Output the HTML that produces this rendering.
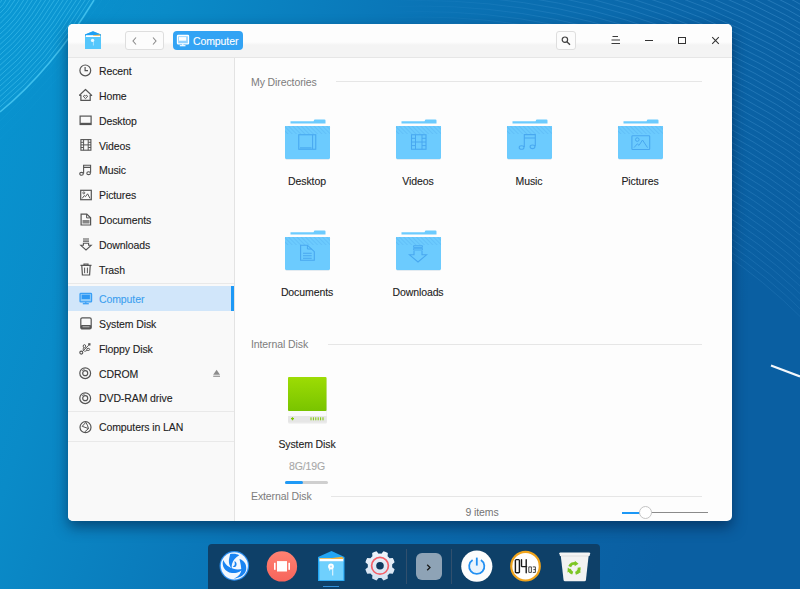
<!DOCTYPE html>
<html><head><meta charset="utf-8">
<style>
*{margin:0;padding:0;box-sizing:border-box}
html,body{width:800px;height:589px;overflow:hidden}
body{position:relative;font-family:"Liberation Sans",sans-serif;background:#0a74b6}
.a{position:absolute}
.t{position:absolute;font-size:10.5px;line-height:13px;white-space:nowrap;letter-spacing:-0.1px;color:#222;-webkit-text-stroke:0.1px currentColor}
.hdr{color:#7c7c7c;-webkit-text-stroke:0 !important}
.c{text-align:center;width:120px}
svg{position:absolute;overflow:visible}
</style></head><body>

<!-- background lines -->
<svg class="a" style="left:0;top:0" width="800" height="589" viewBox="0 0 800 589">
  <defs>
    <linearGradient id="bgg" x1="0" y1="0" x2="1" y2="0.25">
      <stop offset="0" stop-color="#0895d1"/>
      <stop offset="0.2" stop-color="#0a8bc8"/>
      <stop offset="0.5" stop-color="#0a74b6"/>
      <stop offset="0.8" stop-color="#0a66a9"/>
      <stop offset="1" stop-color="#0a5fa2"/>
    </linearGradient>
    <radialGradient id="gUR" cx="800" cy="0" r="420" gradientUnits="userSpaceOnUse"><stop offset="0" stop-color="#fff"/><stop offset="0.6" stop-color="#fff" stop-opacity=".6"/><stop offset="1" stop-color="#fff" stop-opacity="0"/></radialGradient><mask id="mUR"><rect width="800" height="589" fill="url(#gUR)"/></mask>
  </defs>
  <rect width="800" height="589" fill="url(#bgg)"/>
  <path d="M0 0 H96 Q53 70 0 112 Z" fill="#12a0dc" opacity=".3"/>
  <path d="M0 112.0 Q51.7 69.4 94.0 0" stroke="#52cdf5" stroke-width="1.5" fill="none" opacity="0.75"/>
  <path d="M0 106.8 Q49.3 66.2 89.6 0" stroke="#52cdf5" stroke-width="1.0" fill="none" opacity="0.45"/>
  <path d="M0 101.6 Q46.9 63.0 85.2 0" stroke="#52cdf5" stroke-width="1.0" fill="none" opacity="0.45"/>
  <path d="M0 96.4 Q44.4 59.8 80.8 0" stroke="#52cdf5" stroke-width="1.0" fill="none" opacity="0.45"/>
  <path d="M0 91.2 Q42.0 56.5 76.4 0" stroke="#52cdf5" stroke-width="1.0" fill="none" opacity="0.45"/>
  <path d="M0 86.0 Q39.6 53.3 72.0 0" stroke="#52cdf5" stroke-width="1.0" fill="none" opacity="0.45"/>
  <path d="M0 80.8 Q37.2 50.1 67.6 0" stroke="#52cdf5" stroke-width="1.0" fill="none" opacity="0.45"/>
  <path d="M0 75.6 Q34.8 46.9 63.2 0" stroke="#52cdf5" stroke-width="1.0" fill="none" opacity="0.45"/>
  <path d="M0 70.4 Q32.3 43.6 58.8 0" stroke="#52cdf5" stroke-width="1.0" fill="none" opacity="0.45"/>
  <path d="M0 65.2 Q29.9 40.4 54.4 0" stroke="#52cdf5" stroke-width="1.0" fill="none" opacity="0.45"/>
  <path d="M0 60.0 Q27.5 37.2 50.0 0" stroke="#52cdf5" stroke-width="1.0" fill="none" opacity="0.45"/>
  <path d="M0 54.8 Q25.1 34.0 45.6 0" stroke="#52cdf5" stroke-width="1.0" fill="none" opacity="0.45"/>
  <path d="M0 49.6 Q22.7 30.8 41.2 0" stroke="#52cdf5" stroke-width="1.0" fill="none" opacity="0.45"/>
  <path d="M0 44.4 Q20.2 27.5 36.8 0" stroke="#52cdf5" stroke-width="1.0" fill="none" opacity="0.45"/>
  <path d="M0 39.2 Q17.8 24.3 32.4 0" stroke="#52cdf5" stroke-width="1.0" fill="none" opacity="0.45"/>
  <path d="M0 34.0 Q15.4 21.1 28.0 0" stroke="#52cdf5" stroke-width="1.0" fill="none" opacity="0.45"/>
  <path d="M0 28.8 Q13.0 17.9 23.6 0" stroke="#52cdf5" stroke-width="1.0" fill="none" opacity="0.45"/>
  <path d="M0 23.6 Q10.6 14.6 19.2 0" stroke="#52cdf5" stroke-width="1.0" fill="none" opacity="0.45"/>
  <path d="M0 18.4 Q8.1 11.4 14.8 0" stroke="#52cdf5" stroke-width="1.0" fill="none" opacity="0.45"/>
  <path d="M0 13.2 Q5.7 8.2 10.4 0" stroke="#52cdf5" stroke-width="1.0" fill="none" opacity="0.45"/>
  <path d="M0 8.0 Q3.3 5.0 6.0 0" stroke="#52cdf5" stroke-width="1.0" fill="none" opacity="0.45"/>
  <path d="M0 2.8 Q0.9 1.7 1.6 0" stroke="#52cdf5" stroke-width="1.0" fill="none" opacity="0.45"/>
  <path d="M0 121.0 Q51.0 72.6 102.0 0" stroke="#3cbde8" stroke-width="0.7" fill="none" opacity="0.130"/>
  <path d="M0 130.0 Q55.0 78.0 110.0 0" stroke="#3cbde8" stroke-width="0.7" fill="none" opacity="0.100"/>
  <path d="M0 139.0 Q59.0 83.4 118.0 0" stroke="#3cbde8" stroke-width="0.7" fill="none" opacity="0.070"/>
  <path d="M0 148.0 Q63.0 88.8 126.0 0" stroke="#3cbde8" stroke-width="0.7" fill="none" opacity="0.040"/>
  <g mask="url(#mUR)" opacity="0.45"><circle cx="420" cy="700" r="540.0" stroke="#5aa8e0" stroke-width="0.75" fill="none"/><circle cx="420" cy="700" r="545.5" stroke="#5aa8e0" stroke-width="0.75" fill="none"/><circle cx="420" cy="700" r="551.0" stroke="#5aa8e0" stroke-width="0.75" fill="none"/><circle cx="420" cy="700" r="556.5" stroke="#5aa8e0" stroke-width="0.75" fill="none"/><circle cx="420" cy="700" r="562.0" stroke="#5aa8e0" stroke-width="0.75" fill="none"/><circle cx="420" cy="700" r="567.5" stroke="#5aa8e0" stroke-width="0.75" fill="none"/><circle cx="420" cy="700" r="573.0" stroke="#5aa8e0" stroke-width="0.75" fill="none"/><circle cx="420" cy="700" r="578.5" stroke="#5aa8e0" stroke-width="0.75" fill="none"/><circle cx="420" cy="700" r="584.0" stroke="#5aa8e0" stroke-width="0.75" fill="none"/><circle cx="420" cy="700" r="589.5" stroke="#5aa8e0" stroke-width="0.75" fill="none"/><circle cx="420" cy="700" r="595.0" stroke="#5aa8e0" stroke-width="0.75" fill="none"/><circle cx="420" cy="700" r="600.5" stroke="#5aa8e0" stroke-width="0.75" fill="none"/><circle cx="420" cy="700" r="606.0" stroke="#5aa8e0" stroke-width="0.75" fill="none"/><circle cx="420" cy="700" r="611.5" stroke="#5aa8e0" stroke-width="0.75" fill="none"/><circle cx="420" cy="700" r="617.0" stroke="#5aa8e0" stroke-width="0.75" fill="none"/><circle cx="420" cy="700" r="622.5" stroke="#5aa8e0" stroke-width="0.75" fill="none"/><circle cx="420" cy="700" r="628.0" stroke="#5aa8e0" stroke-width="0.75" fill="none"/><circle cx="420" cy="700" r="633.5" stroke="#5aa8e0" stroke-width="0.75" fill="none"/><circle cx="420" cy="700" r="639.0" stroke="#5aa8e0" stroke-width="0.75" fill="none"/><circle cx="420" cy="700" r="644.5" stroke="#5aa8e0" stroke-width="0.75" fill="none"/><circle cx="420" cy="700" r="650.0" stroke="#5aa8e0" stroke-width="0.75" fill="none"/><circle cx="420" cy="700" r="655.5" stroke="#5aa8e0" stroke-width="0.75" fill="none"/><circle cx="420" cy="700" r="661.0" stroke="#5aa8e0" stroke-width="0.75" fill="none"/><circle cx="420" cy="700" r="666.5" stroke="#5aa8e0" stroke-width="0.75" fill="none"/><circle cx="420" cy="700" r="672.0" stroke="#5aa8e0" stroke-width="0.75" fill="none"/><circle cx="420" cy="700" r="677.5" stroke="#5aa8e0" stroke-width="0.75" fill="none"/><circle cx="420" cy="700" r="683.0" stroke="#5aa8e0" stroke-width="0.75" fill="none"/><circle cx="420" cy="700" r="688.5" stroke="#5aa8e0" stroke-width="0.75" fill="none"/><circle cx="420" cy="700" r="694.0" stroke="#5aa8e0" stroke-width="0.75" fill="none"/><circle cx="420" cy="700" r="699.5" stroke="#5aa8e0" stroke-width="0.75" fill="none"/><circle cx="420" cy="700" r="705.0" stroke="#5aa8e0" stroke-width="0.75" fill="none"/><circle cx="420" cy="700" r="710.5" stroke="#5aa8e0" stroke-width="0.75" fill="none"/><circle cx="420" cy="700" r="716.0" stroke="#5aa8e0" stroke-width="0.75" fill="none"/><circle cx="420" cy="700" r="721.5" stroke="#5aa8e0" stroke-width="0.75" fill="none"/><circle cx="420" cy="700" r="727.0" stroke="#5aa8e0" stroke-width="0.75" fill="none"/><circle cx="420" cy="700" r="732.5" stroke="#5aa8e0" stroke-width="0.75" fill="none"/><circle cx="420" cy="700" r="738.0" stroke="#5aa8e0" stroke-width="0.75" fill="none"/><circle cx="420" cy="700" r="743.5" stroke="#5aa8e0" stroke-width="0.75" fill="none"/><circle cx="420" cy="700" r="749.0" stroke="#5aa8e0" stroke-width="0.75" fill="none"/><circle cx="420" cy="700" r="754.5" stroke="#5aa8e0" stroke-width="0.75" fill="none"/><circle cx="420" cy="700" r="760.0" stroke="#5aa8e0" stroke-width="0.75" fill="none"/><circle cx="420" cy="700" r="765.5" stroke="#5aa8e0" stroke-width="0.75" fill="none"/><circle cx="420" cy="700" r="771.0" stroke="#5aa8e0" stroke-width="0.75" fill="none"/><circle cx="420" cy="700" r="776.5" stroke="#5aa8e0" stroke-width="0.75" fill="none"/><circle cx="420" cy="700" r="782.0" stroke="#5aa8e0" stroke-width="0.75" fill="none"/><circle cx="420" cy="700" r="787.5" stroke="#5aa8e0" stroke-width="0.75" fill="none"/><circle cx="420" cy="700" r="793.0" stroke="#5aa8e0" stroke-width="0.75" fill="none"/><circle cx="420" cy="700" r="798.5" stroke="#5aa8e0" stroke-width="0.75" fill="none"/></g>
  <path d="M771 365.5 L800 376.5" stroke="#f4f8fc" stroke-width="2.2"/>
</svg>
<!-- window -->
<div class="a" style="left:68px;top:24px;width:664px;height:497px;border-radius:5px;background:#fdfdfd;box-shadow:0 6px 14px rgba(0,25,60,.55);overflow:hidden">
  <div class="a" style="left:0;top:0;width:664px;height:33px;background:linear-gradient(#fdfdfd 0,#fdfdfd 18px,#f4f4f4 21px,#f4f4f4 33px)"></div>
  <div class="a" style="left:0;top:33px;width:664px;height:1px;background:#e6e6e6"></div>
  <div class="a" style="left:0;top:34px;width:166px;height:463px;background:#f9f9f9"></div>
  <div class="a" style="left:166px;top:34px;width:1px;height:463px;background:#e3e3e3"></div>
  <!-- sidebar separators -->
  <div class="a" style="left:0;top:259px;width:166px;height:1px;background:#e9e9e9"></div>
  <div class="a" style="left:0;top:387px;width:166px;height:1px;background:#e9e9e9"></div>
  <div class="a" style="left:0;top:417px;width:166px;height:1px;background:#e9e9e9"></div>
  <!-- selected -->
  <div class="a" style="left:0;top:262px;width:163px;height:25px;background:#d1e6fa"></div>
  <div class="a" style="left:163px;top:262px;width:3px;height:25px;background:#1c98f6"></div>
</div>

<!-- title bar elements -->
<svg style="left:85px;top:31px" width="16" height="19" viewBox="0 0 16 19">
  <path d="M0 3.4 L8 0.3 L16 3.4 V18.1 H0 Z" fill="#56c7fc"/>
  <path d="M0 3.4 L8 0.3 L16 3.4 V5 H0 Z" fill="#1d9ff3"/>
  <rect x="0.8" y="4.2" width="14.4" height="1.8" fill="#fff"/>
  <path d="M8 4.2 L15.2 3.6 V4.8 H8 Z" fill="#f5b440"/>
  <circle cx="7.6" cy="9.4" r="1.7" fill="#e8f8ff"/>
  <path d="M8.4 11 V14.5" stroke="#c8ecff" stroke-width="0.7"/>
</svg>
<div class="a" style="left:125px;top:31px;width:39px;height:19px;border:1px solid #dedede;border-radius:3px;background:#fcfcfc"></div>
<svg style="left:132px;top:37px" width="5" height="8" viewBox="0 0 5 8"><path d="M4 0.5 L1 4 L4 7.5" stroke="#8a8a8a" stroke-width="1.1" fill="none"/></svg>
<svg style="left:152px;top:37px" width="5" height="8" viewBox="0 0 5 8"><path d="M1 0.5 L4 4 L1 7.5" stroke="#8a8a8a" stroke-width="1.1" fill="none"/></svg>
<div class="a" style="left:173px;top:31px;width:70px;height:19px;border-radius:4px;background:#33a3f4"></div>
<svg style="left:176px;top:34px" width="13" height="13" viewBox="0 0 13 13">
  <rect x="1.5" y="1.5" width="11" height="8.4" rx="0.6" fill="#93d2ff" stroke="#fff" stroke-width="1.3"/>
  <rect x="3" y="3.1" width="7.2" height="3.6" fill="#fff"/>
  <path d="M6.8 9.9 V11.4" stroke="#fff" stroke-width="1.2"/>
  <path d="M3.8 11.7 H9.5" stroke="#fff" stroke-width="1.2"/>
</svg>
<div class="t" style="left:193px;top:35px;color:#fff">Computer</div>

<div class="a" style="left:556px;top:31px;width:20px;height:19px;border:1px solid #dedede;border-radius:3px;background:#fcfcfc"></div>
<svg style="left:561px;top:36px" width="10" height="10" viewBox="0 0 10 10"><circle cx="3.9" cy="3.7" r="2.7" stroke="#404040" stroke-width="1.2" fill="none"/><path d="M5.9 5.7 L9 8.8" stroke="#404040" stroke-width="1.3"/></svg>
<svg style="left:611px;top:35px" width="10" height="10" viewBox="0 0 10 10"><path d="M1.5 1.5 H7 M0.5 5 H9 M0.5 8.5 H9" stroke="#3a3a3a" stroke-width="1.1"/></svg>
<div class="a" style="left:645px;top:40px;width:8px;height:1.3px;background:#333"></div>
<div class="a" style="left:678px;top:37px;width:8px;height:7px;border:1.2px solid #333"></div>
<svg style="left:712px;top:37px" width="7" height="7" viewBox="0 0 7 7"><path d="M0.2 0.2 L6.8 6.8 M6.8 0.2 L0.2 6.8" stroke="#333" stroke-width="1.05"/></svg>

<!-- sidebar texts -->
<div class="t" style="left:99px;top:65px">Recent</div>
<div class="t" style="left:99px;top:90px">Home</div>
<div class="t" style="left:99px;top:115px">Desktop</div>
<div class="t" style="left:99px;top:140px">Videos</div>
<div class="t" style="left:99px;top:164px">Music</div>
<div class="t" style="left:99px;top:189px">Pictures</div>
<div class="t" style="left:99px;top:214px">Documents</div>
<div class="t" style="left:99px;top:239px">Downloads</div>
<div class="t" style="left:99px;top:264px">Trash</div>
<div class="t" style="left:99px;top:293px;color:#3b9ff0">Computer</div>
<div class="t" style="left:99px;top:318px">System Disk</div>
<div class="t" style="left:99px;top:343px">Floppy Disk</div>
<div class="t" style="left:99px;top:368px">CDROM</div>
<div class="t" style="left:99px;top:392px">DVD-RAM drive</div>
<div class="t" style="left:99px;top:421px">Computers in LAN</div>

<svg class="a" style="left:0;top:0" width="0" height="0"><defs>
<pattern id="stripes" width="3" height="3" patternUnits="userSpaceOnUse" patternTransform="rotate(-45)"><rect width="3" height="3" fill="#6ccbfe"/><rect width="1" height="3" fill="#62c0f8"/></pattern>
</defs></svg>
<svg style="left:79px;top:64px" width="13" height="13" viewBox="0 0 13 13"><circle cx="6.3" cy="6.4" r="5.4" fill="none" stroke="#555" stroke-width="1.2"/><path d="M6.1 3 V6.6 H9" fill="none" stroke="#555" stroke-width="1.2"/></svg>
<svg style="left:79px;top:88px" width="14" height="14" viewBox="0 0 14 14"><path d="M0.3 7.4 L6.5 1.5 L12.7 7.4 H11.2" fill="none" stroke="#555" stroke-width="1.2" stroke-linejoin="round"/><path d="M0.3 7.4 H1.9 M1.9 6.8 V12.4 H11.2 V6.8" fill="none" stroke="#555" stroke-width="1.2"/><path d="M6.5 10.6 L4.7 8.9 Q4.1 7.9 5.1 7.4 Q6 7.1 6.5 7.9 Q7 7.1 7.9 7.4 Q8.9 7.9 8.3 8.9 Z" fill="none" stroke="#555" stroke-width="1"/></svg>
<svg style="left:79px;top:115px" width="13" height="11" viewBox="0 0 13 11"><rect x="1.1" y="1.1" width="11" height="8.4" fill="none" stroke="#555" stroke-width="1.2"/><rect x="1.1" y="7.8" width="11" height="1.8" fill="#555"/></svg>
<svg style="left:80px;top:139px" width="12" height="12" viewBox="0 0 12 12"><rect x="0.9" y="0.6" width="10" height="10.6" fill="none" stroke="#555" stroke-width="1.1"/><path d="M3.6 0.6 V11.2 M8.2 0.6 V11.2 M0.9 3.3 H3.6 M0.9 5.9 H11 M0.9 8.5 H3.6 M8.2 3.3 H11 M8.2 8.5 H11" stroke="#555" stroke-width="1"/></svg>
<svg style="left:79px;top:164px" width="13" height="12" viewBox="0 0 13 12"><path d="M4.6 9.6 V1.2 H11.6 V8.8 M4.6 3.4 H11.6" fill="none" stroke="#555" stroke-width="1.1"/><ellipse cx="2.5" cy="9.8" rx="1.8" ry="1.4" fill="none" stroke="#555" stroke-width="1.1"/><ellipse cx="9.6" cy="9.2" rx="1.8" ry="1.4" fill="none" stroke="#555" stroke-width="1.1"/></svg>
<svg style="left:80px;top:189px" width="12" height="12" viewBox="0 0 12 12"><rect x="0.7" y="1.3" width="10.6" height="9.4" fill="none" stroke="#555" stroke-width="1.2"/><circle cx="3.8" cy="3.9" r="1" fill="none" stroke="#555" stroke-width="0.9"/><path d="M2.2 9.4 L4.3 6.6 L5.5 7.6 L7.6 4.8 L10 9.4" fill="none" stroke="#555" stroke-width="1"/></svg>
<svg style="left:80px;top:213px" width="12" height="13" viewBox="0 0 12 13"><path d="M1.1 1.1 H6.8 L10.6 4.8 V12 H1.1 Z" fill="none" stroke="#555" stroke-width="1.2"/><path d="M6.6 1.1 V4.9 H10.6" fill="none" stroke="#555" stroke-width="1"/><rect x="2.5" y="7" width="7" height="3.5" fill="#555" opacity=".7"/></svg>
<svg style="left:80px;top:238px" width="12" height="13" viewBox="0 0 12 13"><path d="M3 1 H9 M3 3.2 H9" stroke="#555" stroke-width="1.2"/><path d="M3.4 5.2 V7.3 H0.8 L6 12 L11.2 7.3 H8.6 V5.2 Z" fill="none" stroke="#555" stroke-width="1.1"/></svg>
<svg style="left:80px;top:263px" width="12" height="13" viewBox="0 0 12 13"><path d="M0.5 2.4 H11.5 M4 2.4 V1 H8 V2.4" fill="none" stroke="#555" stroke-width="1.2"/><path d="M1.8 2.6 L2.4 12 H9.6 L10.2 2.6" fill="none" stroke="#555" stroke-width="1.2"/><path d="M4.6 4.6 V10.2 M7.4 4.6 V10.2" stroke="#555" stroke-width="1"/></svg>
<svg style="left:79px;top:292px" width="13" height="13" viewBox="0 0 13 13">
  <rect x="1.05" y="1.35" width="11.5" height="8.6" rx="0.8" fill="#94cdf9" stroke="#3a9ff5" stroke-width="1.3"/>
  <rect x="2.7" y="2.7" width="8.2" height="4.4" fill="#2f98f3"/>
  <path d="M6.8 10 V11.4" stroke="#3a9ff5" stroke-width="1.2"/>
  <path d="M3.8 11.7 H9.8" stroke="#3a9ff5" stroke-width="1.3"/>
</svg>
<svg style="left:80px;top:317px" width="12" height="13" viewBox="0 0 12 13"><rect x="0.8" y="0.8" width="10.4" height="11.2" rx="1.5" fill="none" stroke="#555" stroke-width="1.2"/><rect x="0.8" y="8" width="10.4" height="4" rx="1" fill="#555"/><path d="M2.5 9.8 H9.5" stroke="#ddd" stroke-width="0.8"/></svg>
<svg style="left:79px;top:342px" width="13" height="13" viewBox="0 0 13 13"><circle cx="2.3" cy="10.6" r="1.5" fill="none" stroke="#555" stroke-width="1.1"/><path d="M3.4 9.5 L9.6 3.3" stroke="#555" stroke-width="1"/><ellipse cx="5.4" cy="4.2" rx="1.2" ry="1.6" fill="none" stroke="#555" stroke-width="1"/><path d="M4.6 5.6 Q3.6 7.2 4.6 8.6" fill="none" stroke="#555" stroke-width="0.9"/><ellipse cx="9.2" cy="7.4" rx="1.5" ry="1.1" fill="none" stroke="#555" stroke-width="1"/><path d="M8 8.3 Q7 9.4 5.2 9.2" fill="none" stroke="#555" stroke-width="0.9"/><rect x="9.2" y="1.2" width="2.3" height="2.3" fill="#555"/></svg>
<svg style="left:79px;top:367px" width="13" height="13" viewBox="0 0 13 13"><circle cx="6.2" cy="6.2" r="5.4" fill="none" stroke="#555" stroke-width="1.2"/><circle cx="6.2" cy="6.2" r="2.5" fill="none" stroke="#555" stroke-width="1.2"/><path d="M3.2 4 Q4 2.6 5.6 2.3" fill="none" stroke="#555" stroke-width="0.8"/></svg>
<svg style="left:79px;top:392px" width="13" height="13" viewBox="0 0 13 13"><circle cx="6.2" cy="6.2" r="5.4" fill="none" stroke="#555" stroke-width="1.2"/><circle cx="6.2" cy="6.2" r="2.5" fill="none" stroke="#555" stroke-width="1.2"/><path d="M3.2 4 Q4 2.6 5.6 2.3" fill="none" stroke="#555" stroke-width="0.8"/></svg>
<svg style="left:79px;top:420px" width="13" height="13" viewBox="0 0 13 13"><circle cx="6.5" cy="7.2" r="5.5" fill="none" stroke="#555" stroke-width="1.2"/><path d="M3.2 6.3 L6.8 2.4 Q8.6 4.8 9.5 8.6 L3.2 6.3 M9.5 8.6 L5.6 12" fill="none" stroke="#555" stroke-width="1"/></svg>
<svg style="left:213px;top:369px" width="8" height="8" viewBox="0 0 8 8"><path d="M0.2 5.7 L3.6 0.8 L7 5.7 Z" fill="#8c8c8c"/><rect x="0.2" y="6.7" width="6.8" height="1.1" fill="#8c8c8c"/></svg>
<svg style="left:285px;top:119px" width="45" height="42" viewBox="0 0 45 42"><rect x="0.5" y="8" width="44" height="33" rx="1.5" fill="#c9d9e6" opacity=".5"/><path d="M5.5 2.3 H28.5 L29.5 0.5 H39.5 Q40.5 0.5 40.5 1.5 V4.5 H5.5 Z" fill="#6ccbfe"/><rect x="0" y="7" width="45" height="33" rx="1.5" fill="#6ccbfe"/><rect x="0" y="7" width="45" height="8" fill="url(#stripes)"/><g transform="translate(0,7)"><rect x="13.75" y="8.75" width="17" height="14.5" fill="none" stroke="#48a8f0" stroke-width="1.1"/><path d="M27.6 8.75 V23.25" stroke="#48a8f0" stroke-width="1"/><path d="M15 21.9 H26.5" stroke="#48a8f0" stroke-width="1.1"/></g></svg>
<svg style="left:396px;top:119px" width="45" height="42" viewBox="0 0 45 42"><rect x="0.5" y="8" width="44" height="33" rx="1.5" fill="#c9d9e6" opacity=".5"/><path d="M5.5 2.3 H28.5 L29.5 0.5 H39.5 Q40.5 0.5 40.5 1.5 V4.5 H5.5 Z" fill="#6ccbfe"/><rect x="0" y="7" width="45" height="33" rx="1.5" fill="#6ccbfe"/><rect x="0" y="7" width="45" height="8" fill="url(#stripes)"/><g transform="translate(0,7)"><rect x="15.5" y="8.75" width="14.5" height="14.5" fill="none" stroke="#48a8f0" stroke-width="1.1"/><path d="M19.5 8.75 V23.25 M26 8.75 V23.25 M15.5 12.3 H19.5 M15.5 16 H30 M15.5 19.6 H19.5 M26 12.3 H30 M26 19.6 H30" stroke="#48a8f0" stroke-width="1"/></g></svg>
<svg style="left:507px;top:119px" width="45" height="42" viewBox="0 0 45 42"><rect x="0.5" y="8" width="44" height="33" rx="1.5" fill="#c9d9e6" opacity=".5"/><path d="M5.5 2.3 H28.5 L29.5 0.5 H39.5 Q40.5 0.5 40.5 1.5 V4.5 H5.5 Z" fill="#6ccbfe"/><rect x="0" y="7" width="45" height="33" rx="1.5" fill="#6ccbfe"/><rect x="0" y="7" width="45" height="8" fill="url(#stripes)"/><g transform="translate(0,7)"><path d="M17.3 21 V8.6 H28.3 V20.2 M17.3 12 H28.3" fill="none" stroke="#48a8f0" stroke-width="1.1"/><ellipse cx="14.6" cy="21.5" rx="2.4" ry="1.8" fill="none" stroke="#48a8f0" stroke-width="1.1"/><ellipse cx="25.5" cy="20.8" rx="2.4" ry="1.8" fill="none" stroke="#48a8f0" stroke-width="1.1"/></g></svg>
<svg style="left:618px;top:119px" width="45" height="42" viewBox="0 0 45 42"><rect x="0.5" y="8" width="44" height="33" rx="1.5" fill="#c9d9e6" opacity=".5"/><path d="M5.5 2.3 H28.5 L29.5 0.5 H39.5 Q40.5 0.5 40.5 1.5 V4.5 H5.5 Z" fill="#6ccbfe"/><rect x="0" y="7" width="45" height="33" rx="1.5" fill="#6ccbfe"/><rect x="0" y="7" width="45" height="8" fill="url(#stripes)"/><g transform="translate(0,7)"><rect x="13.9" y="9.7" width="17.8" height="13.8" rx="0.8" fill="none" stroke="#48a8f0" stroke-width="1.1"/><circle cx="19.3" cy="13.6" r="1.8" fill="none" stroke="#48a8f0" stroke-width="1"/><path d="M16 21.6 L19.3 17.8 L21 19.4 L24.5 14 L29.5 21.6" fill="none" stroke="#48a8f0" stroke-width="1"/></g></svg>
<svg style="left:285px;top:230px" width="45" height="42" viewBox="0 0 45 42"><rect x="0.5" y="8" width="44" height="33" rx="1.5" fill="#c9d9e6" opacity=".5"/><path d="M5.5 2.3 H28.5 L29.5 0.5 H39.5 Q40.5 0.5 40.5 1.5 V4.5 H5.5 Z" fill="#6ccbfe"/><rect x="0" y="7" width="45" height="33" rx="1.5" fill="#6ccbfe"/><rect x="0" y="7" width="45" height="8" fill="url(#stripes)"/><g transform="translate(0,7)"><path d="M15.6 8.2 H22.4 L29.3 14.7 V23.2 H15.6 Z" fill="none" stroke="#48a8f0" stroke-width="1.1"/><path d="M22.4 8.2 V12 H26.5" fill="none" stroke="#48a8f0" stroke-width="1"/><path d="M18 16.3 H26.7 M18 18.8 H26.7 M18 21.3 H26.7" stroke="#48a8f0" stroke-width="1.1"/></g></svg>
<svg style="left:396px;top:230px" width="45" height="42" viewBox="0 0 45 42"><rect x="0.5" y="8" width="44" height="33" rx="1.5" fill="#c9d9e6" opacity=".5"/><path d="M5.5 2.3 H28.5 L29.5 0.5 H39.5 Q40.5 0.5 40.5 1.5 V4.5 H5.5 Z" fill="#6ccbfe"/><rect x="0" y="7" width="45" height="33" rx="1.5" fill="#6ccbfe"/><rect x="0" y="7" width="45" height="8" fill="url(#stripes)"/><g transform="translate(0,7)"><path d="M17.6 8.7 H26.4 V10.4 H17.6 Z M17.6 11.3 H26.4 V13 H17.6 Z" fill="none" stroke="#48a8f0" stroke-width="0.9"/><path d="M18 13.8 V17.8 H13.5 L22 25 L30.5 17.8 H26 V13.8" fill="none" stroke="#48a8f0" stroke-width="1.1"/></g></svg>
<svg style="left:287px;top:376px" width="41" height="48" viewBox="0 0 41 48">
  <defs><linearGradient id="gd" x1="0" y1="0" x2="0" y2="1"><stop offset="0" stop-color="#9ddc04"/><stop offset="1" stop-color="#79c400"/></linearGradient></defs>
  <rect x="1" y="1.5" width="39" height="46" rx="1.5" fill="#d8d8d8" opacity=".5"/>
  <rect x="1" y="1" width="38.5" height="34" rx="1" fill="url(#gd)"/>
  <rect x="1" y="35" width="38.5" height="5" fill="#fafafa"/>
  <rect x="1" y="40" width="38.5" height="6" rx="1" fill="#e6e6e6"/>
  <path d="M4 42.7 H7 M5.5 41.2 V44.2" stroke="#7cc800" stroke-width="1.2"/>
  <path d="M24 41.3 V44.3 M26.4 41.3 V44.3 M28.8 41.3 V44.3 M31.2 41.3 V44.3 M33.6 41.3 V44.3 M36 41.3 V44.3" stroke="#7cc800" stroke-width="1"/>
</svg>

<!-- main -->
<div class="t hdr" style="left:251px;top:76px">My Directories</div>
<div class="a" style="left:336px;top:81px;width:366px;height:1px;background:#e6e6e6"></div>
<div class="t hdr" style="left:251px;top:338px">Internal Disk</div>
<div class="a" style="left:328px;top:344px;width:374px;height:1px;background:#e6e6e6"></div>
<div class="t hdr" style="left:251px;top:490px">External Disk</div>
<div class="a" style="left:331px;top:496px;width:371px;height:1px;background:#e6e6e6"></div>

<div class="t c" style="left:247px;top:175px">Desktop</div>
<div class="t c" style="left:358px;top:175px">Videos</div>
<div class="t c" style="left:469px;top:175px">Music</div>
<div class="t c" style="left:580px;top:175px">Pictures</div>
<div class="t c" style="left:247px;top:286px">Documents</div>
<div class="t c" style="left:358px;top:286px">Downloads</div>
<div class="t c" style="left:247px;top:438px">System Disk</div>
<div class="t c" style="left:247px;top:460px;color:#a8a8a8">8G/19G</div>
<div class="a" style="left:285px;top:481px;width:43px;height:3px;border-radius:2px;background:#cfcfcf"></div>
<div class="a" style="left:285px;top:481px;width:18px;height:3px;border-radius:2px;background:#1f9af6"></div>

<div class="t c" style="left:422px;top:506px;color:#747474;-webkit-text-stroke:0">9 items</div>
<div class="a" style="left:622px;top:512px;width:86px;height:1px;background:#8a8a8a"></div>
<div class="a" style="left:622px;top:512px;width:20px;height:1.5px;background:#1c98f6"></div>
<div class="a" style="left:639px;top:506px;width:13px;height:13px;border-radius:50%;background:#fff;border:1px solid #c4c4c4"></div>

<!-- dock -->
<div class="a" style="left:208px;top:544px;width:392px;height:45px;background:#0e4068;border-radius:4px 4px 0 0"></div>
<div class="a" style="left:406px;top:549px;width:1px;height:35px;background:#31506e"></div>
<div class="a" style="left:451px;top:549px;width:1px;height:35px;background:#31506e"></div>

<!-- dock icons -->
<svg style="left:216px;top:548px" width="36" height="36" viewBox="0 0 589 589">
  <circle cx="300" cy="292" r="242" fill="#2a8ef2"/>
  <circle cx="300" cy="292" r="222" fill="#f2f8ff"/>
  <path d="M118 195 C88 290 140 390 260 408 C350 418 420 372 436 338 C370 362 280 352 220 312 C170 282 140 240 118 195 Z" fill="#1a84f2"/>
  <path d="M232 100 C290 88 345 96 380 118 C320 150 280 200 262 262 C252 300 258 330 268 342 C215 300 200 230 218 160 Z" fill="#1a84f2"/>
  <path d="M385 180 C455 200 505 262 494 352 C482 432 400 490 288 502 C380 462 422 402 412 330 C406 262 392 222 385 180 Z" fill="#1a84f2"/>
  <path d="M300 215 C340 225 350 275 320 305 C300 320 280 310 275 295 C300 300 320 270 300 215 Z" fill="#1a84f2"/>
</svg>
<svg style="left:266px;top:551px" width="32" height="31" viewBox="0 0 32 31">
  <defs><linearGradient id="rd" x1="0" y1="0" x2="0" y2="1"><stop offset="0" stop-color="#ff8272"/><stop offset="1" stop-color="#f7645c"/></linearGradient></defs>
  <circle cx="15.9" cy="15.4" r="15.2" fill="url(#rd)"/>
  <rect x="11" y="10.1" width="10" height="10.4" fill="#fff"/>
  <rect x="8" y="11.8" width="1.6" height="7" fill="#fff"/>
  <rect x="22.4" y="11.8" width="1.6" height="7" fill="#fff"/>
</svg>
<svg style="left:318px;top:550px" width="27" height="32" viewBox="0 0 27 32">
  <path d="M0 7 L13.5 1 L26.5 7 V31 H0 Z" fill="#22a6f4"/>
  <rect x="1.4" y="8.2" width="24" height="3.4" fill="#fff"/>
  <path d="M1.4 8.2 L12 8.2 L24 6.8 L25.4 8.2 V9 H1.4 Z" fill="#f5b440"/>
  <rect x="1.4" y="11.6" width="24" height="18.6" fill="#6fd0fd"/>
  <circle cx="13" cy="16.5" r="2.9" fill="#fff"/>
  <circle cx="13" cy="16.5" r="0.9" fill="#9fdcfb"/>
  <path d="M14.7 19 V25.5" stroke="#e4f6ff" stroke-width="1.1"/>
  <path d="M11.6 18.6 V20.6" stroke="#f0faff" stroke-width="0.9"/>
</svg>
<div class="a" style="left:323px;top:586px;width:16px;height:1.3px;background:#3aa0f0;opacity:.85"></div>
<svg style="left:364px;top:550px" width="32" height="32" viewBox="0 0 32 32">
  <defs><linearGradient id="gg" x1="0" y1="0" x2="0" y2="1"><stop offset="0" stop-color="#eef4fb"/><stop offset="1" stop-color="#d3e1f1"/></linearGradient></defs>
  <path d="M17.38 3.68 L19.50 1.21 A15.0 15.0 0 0 1 23.84 3.01 L23.59 6.25 A12.2 12.2 0 0 1 25.55 8.21 L25.55 8.21 L28.79 7.96 A15.0 15.0 0 0 1 30.59 12.30 L28.12 14.42 A12.2 12.2 0 0 1 28.12 17.18 L28.12 17.18 L30.59 19.30 A15.0 15.0 0 0 1 28.79 23.64 L25.55 23.39 A12.2 12.2 0 0 1 23.59 25.35 L23.59 25.35 L23.84 28.59 A15.0 15.0 0 0 1 19.50 30.39 L17.38 27.92 A12.2 12.2 0 0 1 14.62 27.92 L14.62 27.92 L12.50 30.39 A15.0 15.0 0 0 1 8.16 28.59 L8.41 25.35 A12.2 12.2 0 0 1 6.45 23.39 L6.45 23.39 L3.21 23.64 A15.0 15.0 0 0 1 1.41 19.30 L3.88 17.18 A12.2 12.2 0 0 1 3.88 14.42 L3.88 14.42 L1.41 12.30 A15.0 15.0 0 0 1 3.21 7.96 L6.45 8.21 A12.2 12.2 0 0 1 8.41 6.25 L8.41 6.25 L8.16 3.01 A15.0 15.0 0 0 1 12.50 1.21 L14.62 3.68 A12.2 12.2 0 0 1 17.38 3.68 Z" fill="url(#gg)"/>
  <circle cx="16" cy="15.8" r="8.4" fill="none" stroke="#f4616a" stroke-width="1.7"/>
  <circle cx="16" cy="15.8" r="3.8" fill="#0e3a5f"/>
</svg>
<div class="a" style="left:416px;top:553px;width:26px;height:27px;border-radius:6px;background:#8ea3b6"></div>
<svg style="left:426px;top:564px" width="6" height="7" viewBox="0 0 6 7"><path d="M1.2 0.8 L4 3.5 L1.2 6.2" fill="none" stroke="#1a1a1a" stroke-width="1.3"/></svg>
<svg style="left:461px;top:550px" width="32" height="32" viewBox="0 0 32 32">
  <circle cx="15.8" cy="16.2" r="15.6" fill="#fdfdfd"/>
  <circle cx="15.8" cy="16" r="6.5" fill="#eaf4fd"/>
  <path d="M11.6 10 A7.6 7.6 0 1 0 19.9 10" fill="none" stroke="#2390f2" stroke-width="1.8"/>
  <path d="M15.8 7.6 V15.6" stroke="#2390f2" stroke-width="1.8"/>
</svg>
<svg style="left:510px;top:551px" width="31" height="31" viewBox="0 0 31 31">
  <circle cx="15.5" cy="15.2" r="14.3" fill="#fff" stroke="#f0a41c" stroke-width="2.2"/>
  <g fill="none" stroke="#1a1a1a" stroke-width="1.4" stroke-linecap="round">
    <path d="M5.4 9.2 V21.2 M9.4 9.2 V21.2 M6.2 8.6 H8.6 M6.2 21.8 H8.6"/>
    <path d="M11.5 8.8 V15.3 M11.9 15.6 H16.6 M16.2 8.8 V21.8"/>
  </g>
  <g fill="none" stroke="#333" stroke-width="0.9">
    <path d="M18.8 15.9 H21.4 V21.4 H18.8 Z"/>
    <path d="M22.8 15.9 H25.4 V21.4 H22.8 M23.4 18.6 H25.4"/>
  </g>
</svg>
<svg style="left:559px;top:552px" width="32" height="31" viewBox="0 0 32 31">
  <path d="M0.3 1.3 Q0.3 0.5 1.5 0.5 H30 Q31.2 0.5 31.2 1.5 L30.5 4 H1 Z" fill="#f4f4f4"/>
  <path d="M1.8 4 H29.6 L26.9 28.3 Q26.7 29.3 25.5 29.3 H6 Q4.8 29.3 4.6 28.3 Z" fill="#f2f2f2"/>
  <path d="M1.8 4 H29.6" stroke="#c8c8c8" stroke-width="0.5"/>
  <g transform="translate(15.3,16.4)" fill="none" stroke="#7cc623" stroke-width="3">
    <path d="M-4.6 -1.8 A5 5 0 0 1 1.5 -4.8"/>
    <path d="M4.8 -0.8 A5 5 0 0 1 1.2 4.9"/>
    <path d="M-1.6 4.8 A5 5 0 0 1 -4.9 0.6"/>
  </g>
  <g transform="translate(15.3,16.4)" fill="#7cc623">
    <path d="M0.5 -7.6 L4.2 -4.6 L0.3 -2.2 Z"/>
    <path d="M6.8 3.5 L2.6 5.8 L2.6 1.2 Z"/>
    <path d="M-6.8 4.2 L-6.5 -0.8 L-2.6 2 Z"/>
  </g>
</svg>
</body></html>
